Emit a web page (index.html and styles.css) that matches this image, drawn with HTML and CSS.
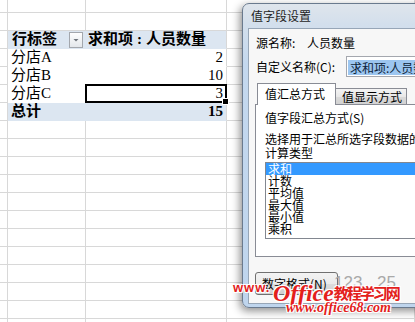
FILE: index.html
```html
<!DOCTYPE html>
<html lang="zh-CN">
<head>
<meta charset="utf-8">
<title>值字段设置</title>
<link rel="stylesheet" href="styles.css">
</head>
<body>
<div class="page">
  <div class="sheet">
    <div class="row r0"><div class="c c0"></div><div class="c c1"></div><div class="c c2"></div><div class="c c3"></div></div>
    <div class="row"><div class="c c0"></div><div class="c c1"></div><div class="c c2"></div><div class="c c3"></div></div>
    <div class="row pv band"><div class="c c0"></div><div class="c c1 hd"><span>行标签</span><span class="dd"><svg width="14" height="16" viewBox="0 0 14 16"><defs><linearGradient id="g" x1="0" y1="0" x2="0" y2="1"><stop offset="0" stop-color="#ffffff"/><stop offset="1" stop-color="#e2e6ea"/></linearGradient></defs><rect x="0.5" y="0.5" width="13" height="15" fill="url(#g)" stroke="#a3a7ad"/><path d="M4.5 7 L9.5 7 L7 9.5 Z" fill="#6e747c"/></svg></span></div><div class="c c2 hd">求和项<span class="colon">:</span>人员数量</div><div class="c c3"></div></div>
    <div class="row pv"><div class="c c0"></div><div class="c c1">分店A</div><div class="c c2 num">2</div><div class="c c3"></div></div>
    <div class="row pv"><div class="c c0"></div><div class="c c1">分店B</div><div class="c c2 num">10</div><div class="c c3"></div></div>
    <div class="row pv"><div class="c c0"></div><div class="c c1">分店C</div><div class="c c2 num sel">3</div><div class="c c3"></div></div>
    <div class="row pv band"><div class="c c0"></div><div class="c c1">总计</div><div class="c c2 num">15</div><div class="c c3"></div></div>
    <div class="row"><div class="c c0"></div><div class="c c1"></div><div class="c c2"></div><div class="c c3"></div></div>
    <div class="row"><div class="c c0"></div><div class="c c1"></div><div class="c c2"></div><div class="c c3"></div></div>
    <div class="row"><div class="c c0"></div><div class="c c1"></div><div class="c c2"></div><div class="c c3"></div></div>
    <div class="row"><div class="c c0"></div><div class="c c1"></div><div class="c c2"></div><div class="c c3"></div></div>
    <div class="row"><div class="c c0"></div><div class="c c1"></div><div class="c c2"></div><div class="c c3"></div></div>
    <div class="row"><div class="c c0"></div><div class="c c1"></div><div class="c c2"></div><div class="c c3"></div></div>
    <div class="row"><div class="c c0"></div><div class="c c1"></div><div class="c c2"></div><div class="c c3"></div></div>
    <div class="row"><div class="c c0"></div><div class="c c1"></div><div class="c c2"></div><div class="c c3"></div></div>
    <div class="row"><div class="c c0"></div><div class="c c1"></div><div class="c c2"></div><div class="c c3"></div></div>
    <div class="row"><div class="c c0"></div><div class="c c1"></div><div class="c c2"></div><div class="c c3"></div></div>
    <div class="row"><div class="c c0"></div><div class="c c1"></div><div class="c c2"></div><div class="c c3"></div></div>
    <div class="row"><div class="c c0"></div><div class="c c1"></div><div class="c c2"></div><div class="c c3"></div></div>
  </div>

  <div class="dialog">
    <div class="title">值字段设置</div>
    <div class="client">
      <div class="f1"><span class="lbl1">源名称:</span>人员数量</div>
      <div class="f2"><span class="lbl2">自定义名称(C):</span><div class="tb"><span>求和项:人员数量</span></div></div>
      <div class="tabs"><div class="tab on">值汇总方式</div><div class="tab off">值显示方式</div></div>
      <div class="panel">
        <div class="p1">值字段汇总方式(S)</div>
        <div class="p2">选择用于汇总所选字段数据的<br>计算类型</div>
        <div class="list">
          <div class="item cur">求和</div>
          <div class="item">计数</div>
          <div class="item">平均值</div>
          <div class="item">最大值</div>
          <div class="item">最小值</div>
          <div class="item">乘积</div>
        </div>
      </div>
      <div class="btn">数字格式(N)</div>
    </div>
  </div>

  <div class="wm-ghost g1">123</div>
  <div class="wm-ghost g2">25</div>
  <div class="wm-www">www.</div>
  <div class="wm-office"><span class="wo">Office</span><span class="wc">教程学习网</span></div>
  <div class="wm-url">www.office68.com</div>
</div>
</body>
</html>
```

FILE: styles.css
```css
* { box-sizing: border-box; }
html, body { margin: 0; padding: 0; overflow: hidden; background: #fff; }

.page {
  position: relative;
  width: 415px;
  height: 322px;
  overflow: hidden;
  font-family: "Liberation Serif", "Noto Sans CJK SC", serif;
  color: #000;
}

/* spreadsheet */
.row {
  display: grid;
  grid-template-columns: 8px 78px 141px 1fr;
  height: 18px;
}
.r0 { height: 13px; }
.c {
  border-right: 1px solid #d8d8d8;
  border-bottom: 1px solid #d8d8d8;
  font-size: 15px;
  line-height: 17px;
  white-space: nowrap;
  overflow: hidden;
}
.c1 { padding-left: 3px; }
.pv .c1 { border-right-color: transparent; border-bottom-color: transparent; }
.pv .c2 { border-bottom-color: transparent; }
.band .c1, .band .c2 { background: #dce6f1; font-weight: bold; }
.hd { font-weight: bold; }
.c1.hd { display: flex; align-items: center; padding-left: 4px; }
.dd { margin-left: auto; margin-right: 2px; width: 14px; height: 16px; display: block; }
.dd svg { display: block; }
.c2.hd { padding-left: 2px; }
.colon { padding: 0 4px; }
.num { text-align: right; padding-right: 3px; }

.sel { position: relative; overflow: visible; }
.sel::after {
  content: "";
  position: absolute;
  left: -1px; top: -1px; right: -1px; bottom: -1px;
  border: 2px solid #000;
}
.sel::before {
  content: "";
  position: absolute;
  right: -3px; bottom: -3px;
  width: 5px; height: 5px;
  background: #000;
  border: 1px solid #fff;
  z-index: 2;
}

/* dialog window */
.dialog {
  position: absolute;
  left: 242px;
  top: 3px;
  width: 200px;
  height: 305px;
  border: 1px solid #6a7a8e;
  border-radius: 7px;
  background: linear-gradient(#dfe5ec 0, #d3dfec 20px, #c4d8ee 60px, #bfd5ed 100%);
  box-shadow: -2px 3px 8px rgba(0, 0, 0, 0.45);
  display: flex;
  flex-direction: column;
  padding: 0 0 3px 5px;
  font-family: "Noto Sans CJK SC", sans-serif;
  font-size: 12px;
  color: #000;
}
.title {
  height: 24px;
  line-height: 24px;
  padding-left: 3px;
  color: #1e1e1e;
}
.client {
  flex: 1;
  border: 1px solid #97a6b7;
  border-right: none;
  background: #f7f7f7;
  padding: 5px 0 0 7px;
  display: flex;
  flex-direction: column;
}
.f1 { height: 18px; line-height: 18px; }
.lbl1 { display: inline-block; width: 51px; }
.f2 { display: flex; align-items: center; margin-top: 4px; height: 21px; }
.lbl2 { width: 90px; flex: none; }
.tb {
  flex: 1;
  height: 21px;
  border: 1px solid #a4a7ae;
  border-right: none;
  background: #fff;
  padding: 2px 1px;
  white-space: nowrap;
  overflow: hidden;
}
.tb span {
  display: inline-block;
  background: #9cc6f0;
  color: #0c1f3a;
  line-height: 15px;
  padding: 0 2px;
}
.tabs {
  display: flex;
  align-items: flex-end;
  margin-top: 6px;
  margin-bottom: -1px;
  padding-left: 1px;
  height: 22px;
  position: relative;
  z-index: 1;
}
.tab { border: 1px solid #898c95; border-bottom: none; white-space: nowrap; }
.tab.on {
  width: 79px;
  height: 22px;
  background: #fff;
  padding-left: 7px;
  line-height: 20px;
}
.tab.off {
  width: 71px;
  height: 16px;
  margin-bottom: 1px;
  border-left: none;
  background: linear-gradient(#f4f4f4, #e8e8e8 50%, #dadada 51%, #d2d2d2);
  padding-left: 6px;
  line-height: 15px;
}
.panel {
  margin-left: -1px;
  border: 1px solid #898c95;
  border-right: none;
  background: #fff;
  height: 153px;
  padding: 5px 0 0 9px;
  white-space: nowrap;
}
.p1 { line-height: 16px; }
.p2 { margin-top: 6px; line-height: 14px; }
.list {
  margin-top: 2px;
  height: 77px;
  border: 1px solid #828790;
  border-right: none;
  background: #fff;
}
.item { height: 12px; line-height: 12px; padding-left: 2px; }
.item.cur { background: #3399ff; color: #fff; }
.btn {
  margin-top: 15px;
  margin-left: -1px;
  width: 83px;
  height: 23px;
  border: 1px solid #707070;
  border-radius: 3px;
  background: linear-gradient(#f3f3f3, #ebebeb 50%, #dddddd 51%, #cfcfcf);
  line-height: 21px;
  padding-left: 6px;
  white-space: nowrap;
}

/* watermark overlay */
.wm-ghost {
  position: absolute;
  top: 273px;
  font: 17px "Liberation Sans", sans-serif;
  color: #a9a9a9;
}
.g1 { left: 334px; }
.g2 { left: 377px; }
.wm-www, .wm-office, .wm-url {
  position: absolute;
  color: #e3201b;
  white-space: nowrap;
  text-shadow: 1px 1px 0 #fff, -1px -1px 0 #fff, 1px -1px 0 #fff, -1px 1px 0 #fff;
}
.wm-www {
  left: 233px;
  top: 281px;
  font: bold 13px "Liberation Sans", sans-serif;
  letter-spacing: 1px;
  line-height: 14px;
}
.wm-office {
  left: 273px;
  top: 280px;
  line-height: 24px;
}
.wo { font: italic bold 24px "Liberation Serif", serif; }
.wc {
  font: bold 15px "Noto Sans CJK SC", sans-serif;
  letter-spacing: -2px;
  vertical-align: 2px;
}
.wm-url {
  left: 286px;
  top: 301px;
  font: italic bold 14px "Liberation Serif", serif;
  line-height: 14px;
}
```
